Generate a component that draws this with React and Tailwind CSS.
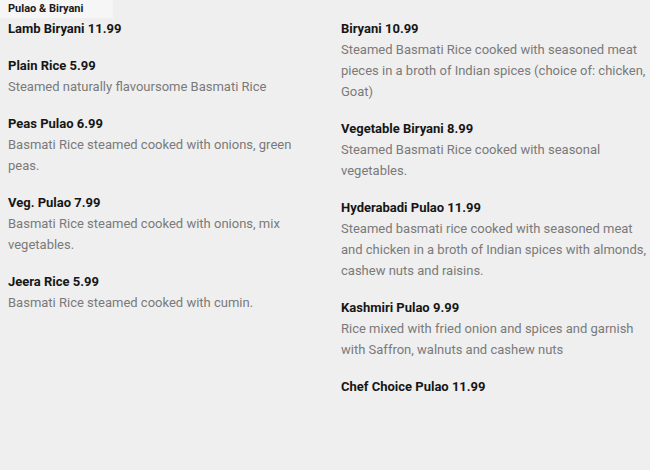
import React from 'react';

const leftItems = [
  { name: 'Lamb Biryani 11.99' },
  { name: 'Plain Rice 5.99', desc: 'Steamed naturally flavoursome Basmati Rice' },
  { name: 'Peas Pulao 6.99', desc: 'Basmati Rice steamed cooked with onions, green peas.' },
  { name: 'Veg. Pulao 7.99', desc: 'Basmati Rice steamed cooked with onions, mix vegetables.' },
  { name: 'Jeera Rice 5.99', desc: 'Basmati Rice steamed cooked with cumin.' },
];

const rightItems = [
  {
    name: 'Biryani 10.99',
    desc: 'Steamed Basmati Rice cooked with seasoned meat pieces in a broth of Indian spices (choice of: chicken, Goat)',
  },
  { name: 'Vegetable Biryani 8.99', desc: 'Steamed Basmati Rice cooked with seasonal vegetables.' },
  {
    name: 'Hyderabadi Pulao 11.99',
    desc: 'Steamed basmati rice cooked with seasoned meat and chicken in a broth of Indian spices with almonds, cashew nuts and raisins.',
  },
  {
    name: 'Kashmiri Pulao 9.99',
    desc: 'Rice mixed with fried onion and spices and garnish with Saffron, walnuts and cashew nuts',
  },
  { name: 'Chef Choice Pulao 11.99' },
];

const MenuItem = ({ name, desc }) => (
  <div className="mb-4">
    <h4 className="text-[13px] leading-[21px] font-bold text-[#161616]">{name}</h4>
    {desc && <p className="text-[13px] leading-[21px] text-[#7a7a7a]">{desc}</p>}
  </div>
);

const App = () => {
  return (
    <div className="w-[650px] h-[470px] bg-[#efefef] font-['Roboto',sans-serif] overflow-hidden">
      {/* Section tab */}
      <div className="w-[113px] h-[18px] bg-[#f6f6f6] pl-2 flex items-center">
        <span className="text-[11px] font-bold text-[#1a1a1a]">Pulao &amp; Biryani</span>
      </div>

      <div className="flex">
        <div className="w-[325px] shrink-0 pl-2 pr-3">
          {leftItems.map((item) => (
            <MenuItem key={item.name} {...item} />
          ))}
        </div>
        <div className="w-[312px] shrink-0 ml-4">
          {rightItems.map((item) => (
            <MenuItem key={item.name} {...item} />
          ))}
        </div>
      </div>
    </div>
  );
};

export default App;
